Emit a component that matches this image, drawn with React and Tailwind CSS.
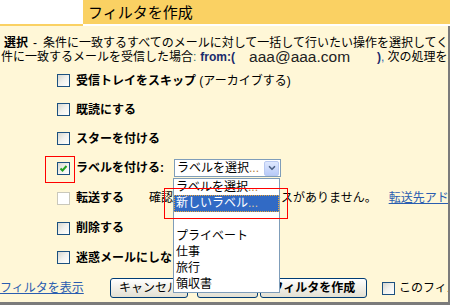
import { ChevronDown } from "lucide-react";

const Box = ({ checked, disabled }) => (
    <span
        className={
            "relative inline-block w-[13px] h-[13px] shrink-0 border " +
            (disabled
                ? "border-[#cac8bb] bg-white"
                : "border-[#1c5180] bg-linear-to-br from-[#d6d6cf] via-[#f2f2ee] to-white")
        }
    >
        {checked && (
            <svg viewBox="0 0 11 11" className="absolute left-0 top-0 w-[11px] h-[11px]">
                <path d="M2.5 5.5 L4.5 7.5 L8.5 3" fill="none" stroke="#21a121" strokeWidth="2" />
            </svg>
        )}
    </span>
);

const Row = ({ h, children }) => (
    <div className={"flex items-center pl-[57px] gap-[6px] whitespace-nowrap " + h}>{children}</div>
);

const Dots = () => <span className="text-[#b07a3a]">...</span>;

export default function App() {
    return (
        <div
            className="w-[450px] h-[305px] overflow-hidden bg-white text-black text-[12px]"
            style={{ fontFamily: '"Liberation Sans", "Noto Sans CJK JP", sans-serif' }}
        >
            {/* header tab */}
            <div className="flex h-[26px]">
                <div className="w-[83px] bg-white border-b-2 border-[#fad163]" />
                <div className="flex-1 bg-[#fad163] border-b-2 border-white pl-[5px] pt-[2px] text-[15px] leading-[22px]">
                    フィルタを作成
                </div>
            </div>

            <div className="relative h-[279px] bg-[#fff7d7] border-r-2 border-b-[3px] border-[#7b7b7b] overflow-hidden">
                <div className="pt-[10px]">
                    <div className="h-[14px] leading-[14px] pl-[4px] whitespace-nowrap flex">
                        <b className="shrink-0">選択</b>
                        <span className="shrink-0 ml-[5px]">-</span>
                        <span className="shrink-0 ml-[6px]">条件に一致するすべてのメールに対して一括して行いたい操作を選択してください。</span>
                    </div>
                    <div className="h-[14px] leading-[14px] pl-[1px] whitespace-nowrap flex items-center">
                        <span className="shrink-0">件に一致するメールを受信した場合</span>
                        <span className="shrink-0 text-[#2f6f6f]">:</span>
                        <b className="shrink-0 ml-[4px] text-[#1a2a6c]">from:(</b>
                        <span className="shrink-0 ml-[14px] text-[15.5px] text-[#222]">aaa@aaa.com</span>
                        <b className="shrink-0 ml-[27px] text-[#1a2a6c]">)</b>
                        <span className="shrink-0 text-[#2a5db0]">,</span>
                        <span className="shrink-0 ml-[3px]">次の処理を実行します:</span>
                    </div>
                </div>

                <div className="mt-[2px]">
                    <Row h="h-[29px]">
                        <Box />
                        <span className="shrink-0">
                            <b>受信トレイをスキップ</b> (アーカイブする)
                        </span>
                    </Row>
                    <Row h="h-[29px]">
                        <Box />
                        <b>既読にする</b>
                    </Row>
                    <Row h="h-[29px]">
                        <Box />
                        <b>スターを付ける</b>
                    </Row>
                    <Row h="h-[30px]">
                        <Box checked />
                        <b className="w-[92px] shrink-0">ラベルを付ける:</b>
                        <div className="w-[107px] h-[18px] shrink-0 border border-[#7f9db9] bg-white flex items-center justify-between">
                            <span className="pl-[2px] leading-[16px]">
                                ラベルを選択<Dots />
                            </span>
                            <span className="w-[15px] h-[15px] mr-[1px] rounded-[2px] border border-[#b9c9f1] bg-linear-to-b from-[#dfe8fe] to-[#b9cbf8] flex items-center justify-center">
                                <ChevronDown className="w-[10px] h-[10px] text-[#4d6185]" strokeWidth={4} />
                            </span>
                        </div>
                    </Row>
                    <Row h="h-[30px]">
                        <Box disabled />
                        <b className="w-[67px] shrink-0">転送する</b>
                        <span className="shrink-0">確認済みの転送先アドレスがありません。</span>
                        <a className="shrink-0 ml-[6px] text-[#2a5db0] underline">転送先アドレスを追加</a>
                    </Row>
                    <Row h="h-[30px]">
                        <Box />
                        <b>削除する</b>
                    </Row>
                    <Row h="h-[29px]">
                        <Box />
                        <b>迷惑メールにしない</b>
                    </Row>
                </div>

                <div className="flex items-center h-[20px] mt-[6px] whitespace-nowrap">
                    <a className="w-[110px] shrink-0 text-[#2a5db0] underline">フィルタを表示</a>
                    <button className="w-[78px] h-[20px] shrink-0 rounded-[3px] border border-[#003c74] bg-linear-to-b from-white to-[#e3e0d2]">
                        キャンセル
                    </button>
                    <button className="ml-[9px] w-[61px] h-[20px] shrink-0 rounded-[3px] border border-[#003c74] bg-linear-to-b from-white to-[#e3e0d2]">
                        テスト
                    </button>
                    <button className="ml-[2px] w-[107px] h-[20px] shrink-0 rounded-[3px] border border-[#003c74] bg-linear-to-b from-white to-[#e3e0d2] font-bold">
                        フィルタを作成
                    </button>
                    <span className="ml-[15px] shrink-0 flex items-center gap-[4px]">
                        <Box />
                        <span>このフィルタを適用</span>
                    </span>
                </div>

                {/* open select list */}
                <div className="absolute left-[173px] top-[152px] w-[107px] border border-[#7f9db9] bg-white whitespace-nowrap">
                    <div className="h-[16px] leading-[16px] pl-[2px]">
                        ラベルを選択<Dots />
                    </div>
                    <div className="h-[17px] leading-[15px] bg-[#316ac5] text-white border border-dotted border-[#e9a53a] pl-[1px]">
                        新しいラベル<span className="text-[#d9c9a0]">...</span>
                    </div>
                    <div className="h-[16px] leading-[12px] pl-[2px] text-[#b9b9b9] text-[10px]">----</div>
                    <div className="h-[16px] leading-[16px] pl-[2px]">プライベート</div>
                    <div className="h-[16px] leading-[16px] pl-[2px]">仕事</div>
                    <div className="h-[16px] leading-[16px] pl-[2px]">旅行</div>
                    <div className="h-[16px] leading-[16px] pl-[2px]">領収書</div>
                </div>

                {/* red annotation boxes */}
                <div className="absolute left-[45px] top-[130px] w-[30px] h-[27px] border border-[#ff0000]" />
                <div className="absolute left-[164px] top-[162px] w-[124px] h-[31px] border border-[#ff0000]" />
            </div>
        </div>
    );
}
